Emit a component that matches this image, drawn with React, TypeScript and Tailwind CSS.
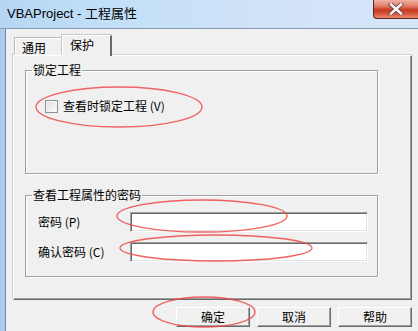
import React from "react";

const font = { fontFamily: '"Noto Sans CJK SC", "Liberation Sans", sans-serif' };

function Btn({ label }: { label: string }) {
  return (
    <div className="w-[74px] h-[20px] flex items-center justify-center bg-[#f0f0f0] border border-t-white border-l-white border-b-[#696969] border-r-[#696969] shadow-[inset_-1px_-1px_0_#a0a0a0] text-[12px] leading-[14px] text-black">
      {label}
    </div>
  );
}

function Input() {
  return (
    <div className="w-[238px] h-[20px] bg-white border border-t-[#a0a0a0] border-l-[#a0a0a0] border-b-white border-r-white shadow-[inset_1px_1px_0_#696969,inset_-1px_-1px_0_#e3e3e3]" />
  );
}

export default function App() {
  return (
    <div className="relative w-[418px] h-[331px] overflow-hidden flex flex-col bg-[#f0f0f0] text-black" style={font}>
      {/* title bar */}
      <div className="h-[29px] shrink-0 flex items-start justify-between border-b border-[#8a9bb0] bg-[linear-gradient(90deg,#b5d6f3_0%,#c3e0f8_30%,#d3e3f7_70%,#d7e5f8_100%)]">
        <div className="h-[28px] flex items-center pl-[7px] text-[13px] leading-[16px] text-black" style={{ fontFamily: '"Liberation Sans", "Noto Sans CJK SC", sans-serif' }}>
          VBAProject - 工程属性
        </div>
        <div className="w-[45px] h-[19px] flex items-center justify-center rounded-bl-[4px] border-l border-b border-[#5a2a22] bg-[linear-gradient(180deg,#eeb3a4_0%,#e27a66_35%,#c2391f_55%,#d45439_75%,#ee8a70_100%)]">
          <svg width="18" height="12" viewBox="0 0 18 12">
            <path d="M4 1.5 L14 10.5 M14 1.5 L4 10.5" stroke="#6a3b36" strokeWidth="4.2" strokeLinecap="square" />
            <path d="M4 1.5 L14 10.5 M14 1.5 L4 10.5" stroke="#f4f4f4" strokeWidth="2.6" strokeLinecap="square" />
          </svg>
        </div>
      </div>

      {/* body */}
      <div className="flex-1 flex">
        <div className="w-[5px] bg-[#a9cbed]" />
        <div className="w-px bg-[#6e8aa6]" />
        <div className="flex-1 flex flex-col pl-[7px] pr-[6px] pt-[6px]">
          {/* tabs */}
          <div className="h-[20px] flex items-end pl-[2px] relative z-10 text-[12px] leading-[14px]">
            <div className="w-[47px] h-[17px] pl-[6px] pt-[2px] border-l border-t border-white shadow-[-1px_-1px_0_#b9b9b9] bg-[#f0f0f0]">
              通用
            </div>
            <div className="w-[50px] h-[21px] -mb-px pl-[7px] pt-[2px] border-l border-t border-white border-r-2 border-r-[#696969] shadow-[-1px_-1px_0_#c8c8c8] bg-[#f0f0f0]">
              保护
            </div>
          </div>
          {/* panel */}
          <div className="h-[245px] border-l border-t border-white border-r border-b border-r-[#696969] border-b-[#696969] shadow-[inset_-1px_-1px_0_#a0a0a0,-1px_-1px_0_#d0d0d0] pl-[11px] pt-[7px] text-[12px] leading-[14px]">
            <fieldset className="w-[353px] h-[111px] border border-[#a0a0a0] shadow-[1px_1px_0_#fff,inset_1px_1px_0_#fff]">
              <legend className="ml-[6px] px-[1px]">锁定工程</legend>
              <div className="mt-[22px] pl-[19px] flex items-center">
                <div className="w-[13px] h-[13px] border border-[#8f8f8f] bg-[linear-gradient(135deg,#dcdcdc,#ffffff)] shadow-[inset_0_0_0_1px_#f4f4f4]" />
                <span className="ml-[5px]">查看时锁定工程 (V)</span>
              </div>
            </fieldset>
            <fieldset className="mt-[14px] w-[353px] h-[89px] border border-[#a0a0a0] shadow-[1px_1px_0_#fff,inset_1px_1px_0_#fff]">
              <legend className="ml-[6px] px-[1px]">查看工程属性的密码</legend>
              <div className="mt-[10px] flex flex-col gap-[10px]">
                <div className="flex items-center">
                  <span className="w-[104px] pl-[12px]">密码 (P)</span>
                  <Input />
                </div>
                <div className="flex items-center">
                  <span className="w-[104px] pl-[12px]">确认密码 (C)</span>
                  <Input />
                </div>
              </div>
            </fieldset>
          </div>
          {/* buttons */}
          <div className="mt-[7px] flex justify-end gap-[7px]">
            <Btn label="确定" />
            <Btn label="取消" />
            <Btn label="帮助" />
          </div>
        </div>
      </div>

      {/* red annotation ellipses */}
      <svg className="absolute left-0 top-0 pointer-events-none" width="418" height="331" viewBox="0 0 418 331">
        <g fill="none" stroke="#f04848" strokeOpacity="0.85" strokeWidth="1.4">
          <ellipse cx="119" cy="107" rx="83" ry="20" />
          <ellipse cx="202" cy="216" rx="85" ry="16" />
          <ellipse cx="216" cy="248" rx="96" ry="13" />
          <ellipse cx="204" cy="312" rx="51" ry="15" />
        </g>
      </svg>
    </div>
  );
}
